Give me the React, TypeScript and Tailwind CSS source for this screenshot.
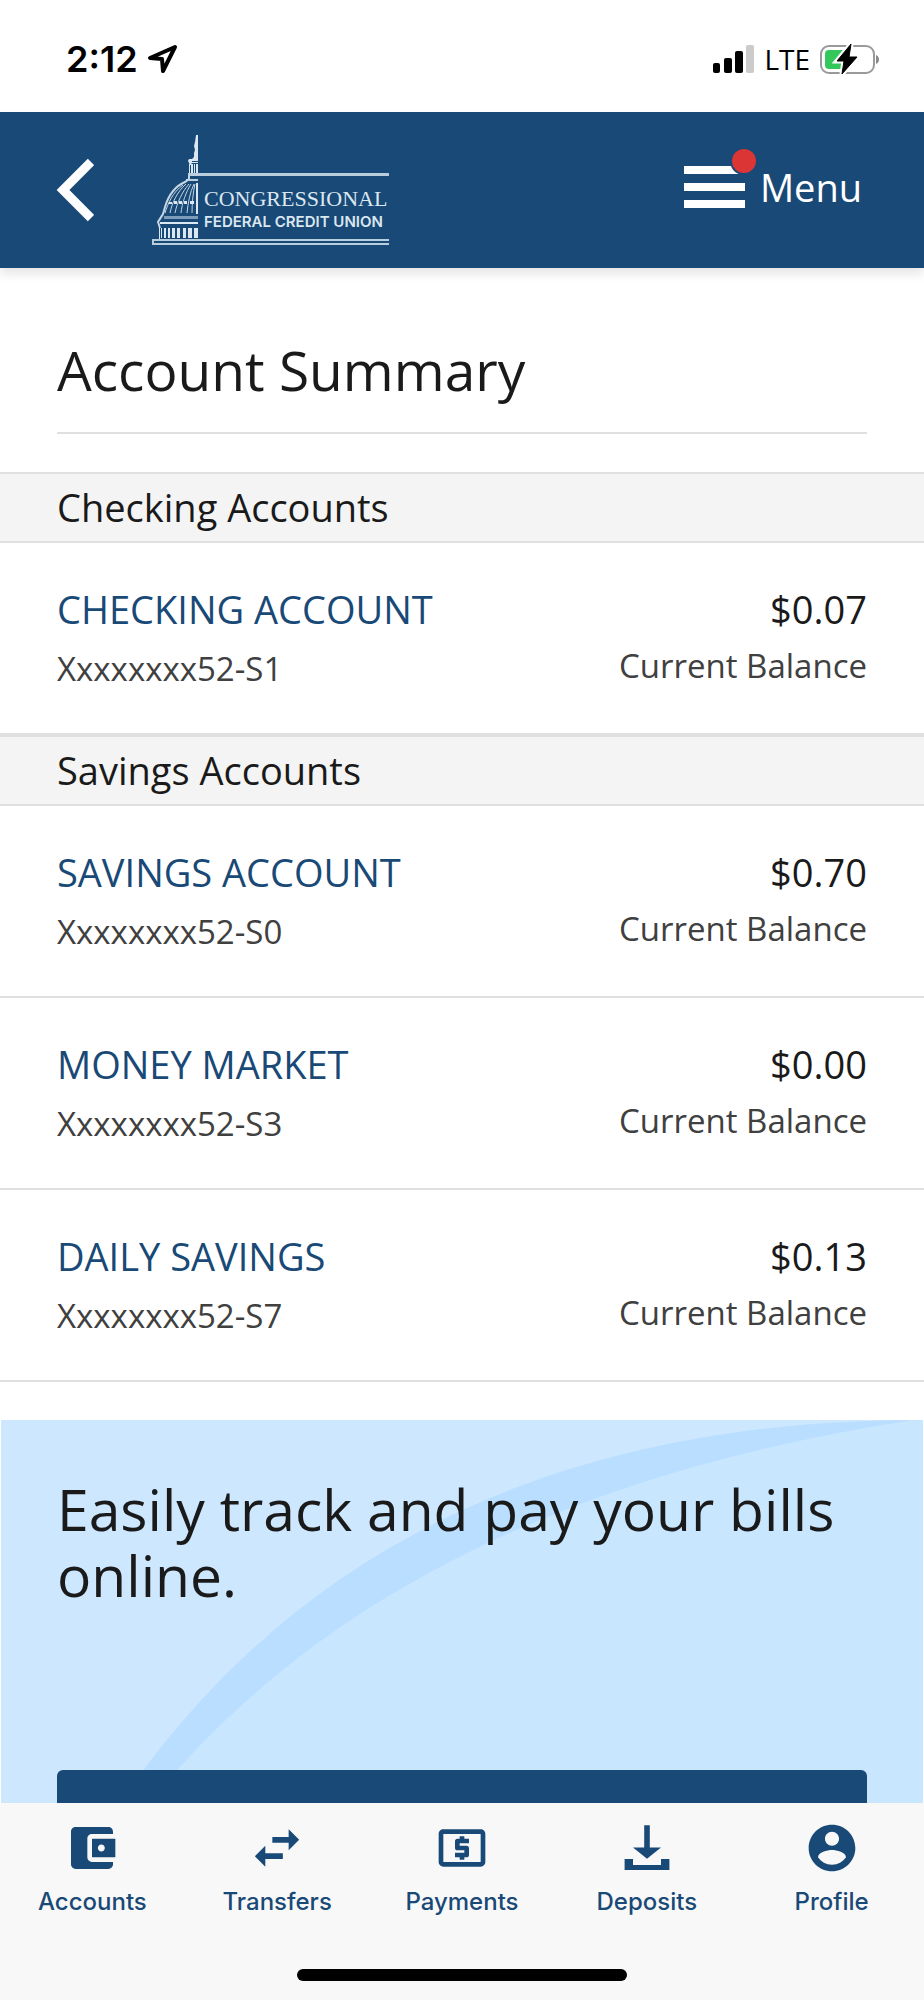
type Account = {
    name: string;
    number: string;
    balance: string;
};

const CHECKING: Account[] = [{ name: "CHECKING ACCOUNT", number: "Xxxxxxxx52-S1", balance: "$0.07" }];

const SAVINGS: Account[] = [
    { name: "SAVINGS ACCOUNT", number: "Xxxxxxxx52-S0", balance: "$0.70" },
    { name: "MONEY MARKET", number: "Xxxxxxxx52-S3", balance: "$0.00" },
    { name: "DAILY SAVINGS", number: "Xxxxxxxx52-S7", balance: "$0.13" },
];

const TABS = [
    {
        label: "Accounts",
        icon: (
            <path d="M21 18v1c0 1.1-.9 2-2 2H5c-1.11 0-2-.9-2-2V5c0-1.1.89-2 2-2h14c1.1 0 2 .9 2 2v1h-9c-1.11 0-2 .9-2 2v8c0 1.1.89 2 2 2h9zm-9-2h10V8H12v8zm4-2.5c-.83 0-1.5-.67-1.5-1.5s.67-1.5 1.5-1.5 1.5.67 1.5 1.5-.67 1.5-1.5 1.5z" />
        ),
    },
    {
        label: "Transfers",
        icon: <path d="M6.99 11 2.500 15.500 6.990 20v-3.300H14.500v-2.400H6.990V11zM21.500 8.500 17 4v3.300H10v2.400h7V13l4.500-4.500z" />,
    },
    {
        label: "Payments",
        icon: (
            <path d="M11 17h2v-1h1c.55 0 1-.45 1-1v-3c0-.55-.45-1-1-1h-3v-1h4V8h-2V7h-2v1h-1c-.55 0-1 .45-1 1v3c0 .55.45 1 1 1h3v1H9v2h2v1zm9-13H4c-1.11 0-1.99.89-1.99 2L2 18c0 1.11.89 2 2 2h16c1.11 0 2-.89 2-2V6c0-1.11-.89-2-2-2zm0 14H4V6h16v12z" />
        ),
    },
    {
        label: "Deposits",
        icon: <path d="M10.800 2.200h2.400v9.600h4.800L12 16.600 6 11.800h4.800zM2.400 16.700H6v2.600h12v-2.600h3.600v4.700H2.400z" />,
    },
    {
        label: "Profile",
        icon: (
            <path d="M12 2C6.48 2 2 6.48 2 12s4.48 10 10 10 10-4.48 10-10S17.52 2 12 2zm0 3c1.66 0 3 1.34 3 3s-1.34 3-3 3-3-1.34-3-3 1.34-3 3-3zm0 14.2c-2.5 0-4.71-1.28-6-3.22.03-1.99 4-3.08 6-3.08 1.99 0 5.97 1.09 6 3.08-1.29 1.94-3.5 3.22-6 3.22z" />
        ),
    },
];

function StatusBar() {
    return (
        <div className="flex h-28 items-center justify-between pt-1.5 pr-11 pl-[66px]">
            <div className="flex items-center gap-2">
                <span className="font-['Inter','Liberation_Sans',sans-serif] text-[36px] leading-10 font-semibold text-black">2:12</span>
                <svg viewBox="0 0 32 32" className="size-8" fill="none" stroke="#000" strokeWidth="4" strokeLinejoin="round">
                    <path d="M29 4 4 15l12 1 1 12z" />
                </svg>
            </div>
            <div className="flex items-center gap-2.5">
                <svg viewBox="0 0 41 28" className="h-7 w-[41px]">
                    <rect x="0" y="18" width="7" height="10" rx="2" />
                    <rect x="11" y="13" width="8" height="15" rx="2" />
                    <rect x="22" y="6" width="8" height="22" rx="2" />
                    <rect x="33" y="0" width="8" height="28" rx="2" fill="#cbcbcb" />
                </svg>
                <span className="text-[28px] leading-10 text-black">LTE</span>
                <svg viewBox="0 0 60 32" className="h-8 w-[60px]">
                    <rect x="1" y="3" width="53" height="27" rx="8" fill="none" stroke="#9a9a9a" strokeWidth="2" />
                    <rect x="5" y="7" width="24" height="19" rx="4" fill="#34c759" />
                    <path d="M56 12c4 1 4 8 0 9z" fill="#8a8a8a" />
                    <path d="M31 1 17 18h7l-2 13 15-17h-8z" stroke="#fff" strokeWidth="5" />
                    <path d="M31 1 17 18h7l-2 13 15-17h-8z" stroke="#000" strokeLinejoin="round" />
                </svg>
            </div>
        </div>
    );
}

function Logo() {
    return (
        <svg viewBox="0 0 238 112" className="h-28 w-[238px]" role="img" aria-label="Congressional Federal Credit Union" fill="#dbe7f1">
            {/* Statue and lantern */}
            <path d="M44 1h2v26h-8l4-4v-4l1-3-1-4 1-4zM37 25h3v3h-1l1 3h-2l-2-4zM39 28h7v1h-7z" />
            <path d="M37 30h1v10h-1zM39 30h2v10h-2zM42 30h1v10h-1zM44 30h2v10h-2z" />
            {/* Dome */}
            <path d="M36 39h201v3H36zM34 45h12v2H34z" fill="#b9cddd" />
            <path d="M37 41v4l-4 3C21 53 16 63 13 73l-2 7-5 8 2 6" fill="none" stroke="#c5d5e3" strokeWidth="2" />
            <path
                d="M31 51C21 58 16 69 13 79M34 50c-9 8-14 19-16 29M37 50c-7 8-12 19-14 29M39 50c-5 8-9 19-10 29M42 50c-4 8-6 19-7 29M43 50c-2 8-3 20-3 29"
                fill="none"
                stroke="#c5d5e3"
                strokeWidth="1"
            />
            <path d="M44 49h2v31h-2zM17 68h3v2h-3zM22 67h3v3h-3zM27 67h3v3h-3zM32 67h3v3h-3zM38 67h4v3h-4z" />
            <path d="M12 82h34v3H12z" fill="#7d9cb9" />
            <path d="M8 88h38v2H8z" />
            {/* Columns and steps */}
            <path d="M7 93h1v12H7zM9 94h1v10H9zM12 94h2v10h-2zM16 94h2v10h-2zM20 94h3v10h-3zM25 94h3v10h-3zM31 94h3v10h-3zM36 94h4v10h-4zM42 94h4v10h-4z" />
            <path d="M0 105h237v2H0zM0 109h237v2H0zM0 105h2v6H0z" fill="#b9cddd" />
            <text x="52" y="72" fontSize="22" className="font-['Liberation_Serif',serif]">
                CONGRESSIONAL
            </text>
            <text x="52" y="93" fontSize="15" fontWeight="600" className="font-['Inter',sans-serif]">
                FEDERAL CREDIT UNION
            </text>
        </svg>
    );
}

function Header() {
    return (
        <header className="relative flex h-[156px] items-center bg-[#194976] pr-[62px] pl-14 shadow-[0_6px_10px_rgba(0,0,0,0.1)]">
            <button aria-label="Back" className="text-white">
                <svg viewBox="0 0 38 64" className="h-16 w-[38px]" fill="none" stroke="currentColor" strokeWidth="9">
                    <path d="M35 4 7 32l28 28" />
                </svg>
            </button>
            <a href="#" className="ml-[58px]">
                <Logo />
            </a>
            <button className="ml-auto flex items-center pb-1.5 text-white">
                <svg viewBox="0 0 76 76" className="size-[76px]">
                    <path d="M0 17h61v8H0zM0 34h61v8H0zM0 51h61v8H0z" fill="#fff" />
                    <circle cx="60" cy="12" r="14" fill="#194976" />
                    <circle cx="60" cy="12" r="12" fill="#dc3535" />
                </svg>
                <span className="text-[38px] leading-[52px]">Menu</span>
            </button>
        </header>
    );
}

function AccountSection({ title, accounts }: { title: string; accounts: Account[] }) {
    return (
        <section>
            <h2 className="border-y-2 border-[#e0e0e0] bg-[#f4f4f4] px-[57px] py-2 text-[38px] leading-[51px] text-[#1a1a1a]">
                {title}
            </h2>
            <ul>
                {accounts.map((account) => (
                    <li key={account.number} className="flex justify-between border-b-2 border-[#e0e0e0] px-[57px] pt-10 pb-9">
                        <div>
                            <a href="#" className="block text-[38px] leading-[52px] text-[#194976]">
                                {account.name}
                            </a>
                            <p className="pt-1.5 text-[33px] leading-[56px] text-[#404040]">{account.number}</p>
                        </div>
                        <div className="text-right">
                            <p className="text-[38px] leading-[52px] text-[#1a1a1a]">{account.balance}</p>
                            <p className="pt-[3px] text-[33px] leading-[56px] text-[#404040]">Current Balance</p>
                        </div>
                    </li>
                ))}
            </ul>
        </section>
    );
}

function BillBanner() {
    return (
        <section className="relative mx-px mt-[38px] h-[383px] overflow-hidden bg-[#cde7ff] px-14 pt-14">
            <svg viewBox="0 0 922 383" preserveAspectRatio="none" className="absolute inset-0 size-full">
                <path d="M913 0C650 40 373 132 178 348L158 383H922V0z" fill="#c9e6ff" />
                <path d="M922 0C600 0 330 100 144 348L120 383H158L178 348C373 132 650 40 913 0z" fill="#b9deff" />
            </svg>
            <h2 className="relative text-[57px] leading-[66px] text-[#1a1a1a]">Easily track and pay your bills online.</h2>
            <button className="relative mt-[162px] h-[92px] w-full rounded-md bg-[#194976] text-[34px] text-white">
                Enroll in Payments
            </button>
        </section>
    );
}

function TabBar() {
    return (
        <nav className="flex flex-1 flex-col bg-[#f8f8f8] font-['Inter','Liberation_Sans',sans-serif]">
            <div className="grid grid-cols-5 pt-[17px]">
                {TABS.map((tab) => (
                    <a key={tab.label} href="#" className="flex flex-col items-center gap-3 text-[#194976]">
                        <svg viewBox="0 0 24 24" className="size-14" fill="currentColor">
                            {tab.icon}
                        </svg>
                        <span className="text-[24px] leading-7 font-medium">{tab.label}</span>
                    </a>
                ))}
            </div>
            {/* Home indicator */}
            <div className="mx-auto mt-[53px] mb-[18px] h-3 w-[330px] rounded-full bg-black" />
        </nav>
    );
}

export default function App() {
    return (
        <div className="flex min-h-screen flex-col bg-white font-['Open_Sans','Noto_Sans',sans-serif]">
            <StatusBar />
            <Header />
            <main>
                <h1 className="mx-[57px] border-b-2 border-[#e0e0e0] pt-[65px] pb-[25px] text-[55px] leading-[74px] text-[#1a1a1a]">
                    Account Summary
                </h1>
                <div className="pt-[38px]">
                    <AccountSection title="Checking Accounts" accounts={CHECKING} />
                    <AccountSection title="Savings Accounts" accounts={SAVINGS} />
                </div>
                <BillBanner />
            </main>
            <TabBar />
        </div>
    );
}
